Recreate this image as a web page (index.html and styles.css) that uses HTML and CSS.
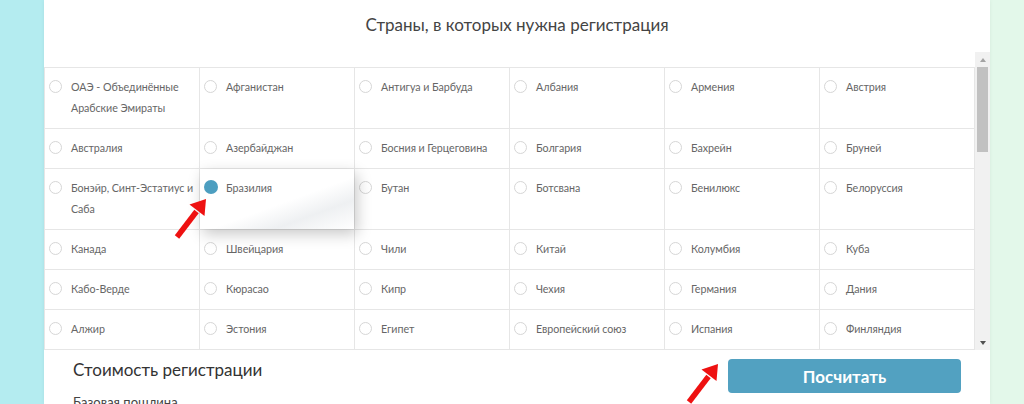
FILE: index.html
```html
<!DOCTYPE html>
<html lang="ru">
<head>
<meta charset="utf-8">
<title>Регистрация</title>
<link rel="stylesheet" href="styles.css">
</head>
<body>
<div class="side side-left"></div>
<main class="panel">
  <h2 class="title">Страны, в которых нужна регистрация</h2>
  <div class="scroller">
    <div class="grid-wrap">
      <div class="grid">
        <label class="cell"><span class="radio"></span><span class="name">ОАЭ - Объединённые Арабские Эмираты</span></label>
        <label class="cell"><span class="radio"></span><span class="name">Афганистан</span></label>
        <label class="cell"><span class="radio"></span><span class="name">Антигуа и Барбуда</span></label>
        <label class="cell"><span class="radio"></span><span class="name">Албания</span></label>
        <label class="cell"><span class="radio"></span><span class="name">Армения</span></label>
        <label class="cell"><span class="radio"></span><span class="name">Австрия</span></label>

        <label class="cell"><span class="radio"></span><span class="name">Австралия</span></label>
        <label class="cell"><span class="radio"></span><span class="name">Азербайджан</span></label>
        <label class="cell"><span class="radio"></span><span class="name">Босния и Герцеговина</span></label>
        <label class="cell"><span class="radio"></span><span class="name">Болгария</span></label>
        <label class="cell"><span class="radio"></span><span class="name">Бахрейн</span></label>
        <label class="cell"><span class="radio"></span><span class="name">Бруней</span></label>

        <label class="cell"><span class="radio"></span><span class="name">Бонэйр, Синт-Эстатиус и Саба</span></label>
        <label class="cell cell-active"><span class="radio radio-on"></span><span class="name">Бразилия</span></label>
        <label class="cell"><span class="radio"></span><span class="name">Бутан</span></label>
        <label class="cell"><span class="radio"></span><span class="name">Ботсвана</span></label>
        <label class="cell"><span class="radio"></span><span class="name">Бенилюкс</span></label>
        <label class="cell"><span class="radio"></span><span class="name">Белоруссия</span></label>

        <label class="cell"><span class="radio"></span><span class="name">Канада</span></label>
        <label class="cell"><span class="radio"></span><span class="name">Швейцария</span></label>
        <label class="cell"><span class="radio"></span><span class="name">Чили</span></label>
        <label class="cell"><span class="radio"></span><span class="name">Китай</span></label>
        <label class="cell"><span class="radio"></span><span class="name">Колумбия</span></label>
        <label class="cell"><span class="radio"></span><span class="name">Куба</span></label>

        <label class="cell"><span class="radio"></span><span class="name">Кабо-Верде</span></label>
        <label class="cell"><span class="radio"></span><span class="name">Кюрасао</span></label>
        <label class="cell"><span class="radio"></span><span class="name">Кипр</span></label>
        <label class="cell"><span class="radio"></span><span class="name">Чехия</span></label>
        <label class="cell"><span class="radio"></span><span class="name">Германия</span></label>
        <label class="cell"><span class="radio"></span><span class="name">Дания</span></label>

        <label class="cell"><span class="radio"></span><span class="name">Алжир</span></label>
        <label class="cell"><span class="radio"></span><span class="name">Эстония</span></label>
        <label class="cell"><span class="radio"></span><span class="name">Египет</span></label>
        <label class="cell"><span class="radio"></span><span class="name">Европейский союз</span></label>
        <label class="cell"><span class="radio"></span><span class="name">Испания</span></label>
        <label class="cell"><span class="radio"></span><span class="name">Финляндия</span></label>
      </div>
    </div>
    <div class="scrollbar">
      <div class="sb-btn"><span class="tri tri-up"></span></div>
      <div class="sb-track"><div class="sb-thumb"></div></div>
      <div class="sb-btn"><span class="tri tri-down"></span></div>
    </div>
  </div>
  <div class="bottom">
    <div class="cost">
      <h3 class="cost-title">Стоимость регистрации</h3>
      <p class="cost-line">Базовая пошлина</p>
    </div>
    <button class="calc">Посчитать</button>
  </div>

  <svg class="arrow arrow-one" width="44" height="48" viewBox="0 0 44 48">
    <line x1="7" y1="42" x2="26.5" y2="16.5" stroke="#ee1111" stroke-width="5.5" stroke-linecap="butt"/>
    <polygon points="36,4 34.5,21 19.5,9.5" fill="#ee1111"/>
  </svg>
  <svg class="arrow arrow-two" width="44" height="48" viewBox="0 0 44 48">
    <line x1="7" y1="42" x2="26.5" y2="16.5" stroke="#ee1111" stroke-width="5.5" stroke-linecap="butt"/>
    <polygon points="36,4 34.5,21 19.5,9.5" fill="#ee1111"/>
  </svg>
</main>
<div class="side side-right"></div>
</body>
</html>
```

FILE: styles.css
```css
* { box-sizing: border-box; }

html, body {
  margin: 0;
  padding: 0;
  height: 100%;
  overflow: hidden;
}

body {
  display: flex;
  font-family: Lato, "Open Sans", "Noto Sans", sans-serif;
  color: #666;
  background: #ffffff;
}

.side { height: 100%; }
.side-left { width: 44px; background: #b4ecf0; flex: none; }
.side-right { flex: 1; background: #e3f8ea; }

.panel {
  position: relative;
  width: 946px;
  flex: none;
  background: #fff;
  box-shadow: 0 0 4px rgba(0, 0, 0, 0.06);
}

.title {
  margin: 0;
  height: 52px;
  padding-top: 14px;
  text-align: center;
  font-size: 17px;
  line-height: 22px;
  font-weight: 400;
  color: #444;
}

.scroller {
  display: flex;
  height: 298px;
}

.grid-wrap {
  width: 931px;
  height: 298px;
  overflow: hidden;
  padding-top: 15px;
}

.grid {
  display: grid;
  grid-template-columns: repeat(6, 154px);
  gap: 1px;
  padding: 1px;
  background: #e6e6e6;
  width: 931px;
}

.cell {
  display: flex;
  align-items: flex-start;
  background: #fff;
  padding: 8px 2px 10px 4px;
  font-size: 10.7px;
  letter-spacing: -0.05px;
  line-height: 21px;
  color: #666;
}

.cell-active {
  position: relative;
  z-index: 2;
  box-shadow: 3px 5px 14px rgba(0, 0, 0, 0.22);
  background: linear-gradient(160deg, #ffffff 55%, #eef0f2 75%, #ffffff 100%);
}

.radio {
  flex: none;
  width: 13px;
  height: 13px;
  margin-top: 4px;
  margin-right: 9px;
  border: 1px solid #d6d6d6;
  border-radius: 50%;
  background: #fff;
}

.radio-on {
  width: 14px;
  height: 14px;
  margin-top: 3px;
  margin-right: 8px;
  border: none;
  background: #4c9ec0;
}

.name { flex: 1; }

.scrollbar {
  width: 15px;
  display: flex;
  flex-direction: column;
  background: #f1f1f1;
}

.sb-btn {
  height: 15px;
  display: flex;
  align-items: center;
  justify-content: center;
}

.tri {
  width: 0;
  height: 0;
  border-left: 3.5px solid transparent;
  border-right: 3.5px solid transparent;
}
.tri-up { border-bottom: 4px solid #a3a3a3; }
.tri-down { border-top: 4px solid #505050; }

.sb-track {
  flex: 1;
  padding: 0 2px;
}

.sb-thumb {
  height: 85px;
  background: #c1c1c1;
}

.bottom {
  display: flex;
  justify-content: space-between;
  align-items: flex-start;
  padding: 9px 29px 0 29px;
}

.cost-title {
  margin: 0;
  font-size: 17px;
  line-height: 22px;
  font-weight: 400;
  color: #333;
}

.cost-line {
  margin: 12px 0 0;
  font-size: 13px;
  line-height: 18px;
  color: #444;
}

.calc {
  width: 233px;
  height: 34px;
  border: none;
  border-radius: 4px;
  background: #52a1c1;
  color: #fff;
  font-family: Lato, "Open Sans", sans-serif;
  font-size: 17px;
  font-weight: 700;
  cursor: pointer;
}

.arrow {
  position: absolute;
  z-index: 5;
}
.arrow-one { left: 126px; top: 195px; }
.arrow-two { left: 638px; top: 360px; }
```
